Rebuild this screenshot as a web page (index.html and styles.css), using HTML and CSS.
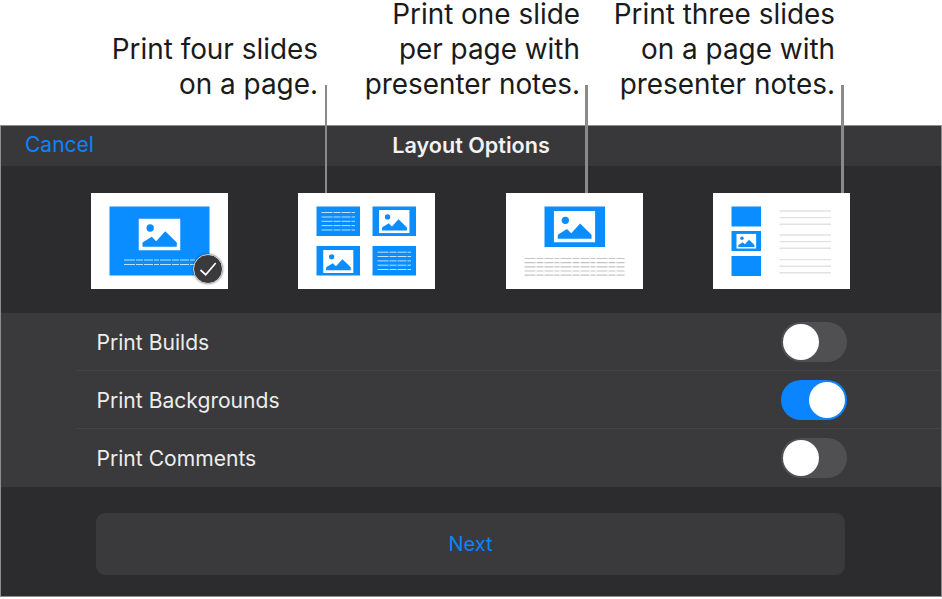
FILE: index.html
```html
<!DOCTYPE html>
<html lang="en">
<head>
    <meta charset="UTF-8">
    <meta name="viewport" content="width=device-width, initial-scale=1.0">
    <title>Layout Options</title>
    <link rel="stylesheet" href="styles.css">
</head>
<body>
    <svg class="defs" width="0" height="0" aria-hidden="true">
        <symbol id="pic" viewBox="0 0 42 32">
            <rect width="42" height="32" fill="#fff"/>
            <circle cx="11.7" cy="9.5" r="3.7" fill="#0a8dff"/>
            <path d="M4 24L13.3 18.3L17.7 22.7L26.7 12.7L38.3 24V28.3H4Z" fill="#0a8dff"/>
        </symbol>
    </svg>

    <div class="page">
        <div class="captions">
            <p class="caption">Print four slides<br>on a page.</p>
            <p class="caption">Print one slide<br>per page with<br>presenter notes.</p>
            <p class="caption">Print three slides<br>on a page with<br>presenter notes.</p>
        </div>

        <!-- leader lines from the captions down to the thumbnails -->
        <span class="leader leader-four"></span>
        <span class="leader leader-one"></span>
        <span class="leader leader-three"></span>

        <div class="panel">
            <div class="nav">
                <span class="cancel">Cancel</span>
                <span class="title">Layout Options</span>
            </div>

            <div class="thumbs">
                <div class="thumb">
                    <svg width="137" height="96" viewBox="0 0 137 96">
                        <rect width="137" height="96" fill="#fff"/>
                        <rect x="18.5" y="13.5" width="100" height="69" fill="#0a8dff"/>
                        <use href="#pic" x="47.5" y="25.5" width="42" height="32"/>
                        <g class="dash dash-white">
                            <path d="M33 67H104M33 71.5H104"/>
                        </g>
                    </svg>
                    <span class="check">
                        <svg width="30" height="30" viewBox="0 0 30 30">
                            <path d="M7.5 16L12.7 20.7L22.7 9" fill="none" stroke="#fff" stroke-width="1.7"/>
                        </svg>
                    </span>
                </div>

                <div class="thumb">
                    <svg width="137" height="96" viewBox="0 0 137 96">
                        <rect width="137" height="96" fill="#fff"/>
                        <rect x="18.5" y="13.5" width="43.5" height="29.5" fill="#0a8dff"/>
                        <rect x="74.5" y="13.5" width="43.5" height="29.5" fill="#0a8dff"/>
                        <rect x="18.5" y="53" width="43.5" height="29.5" fill="#0a8dff"/>
                        <rect x="74.5" y="53" width="43.5" height="29.5" fill="#0a8dff"/>
                        <use href="#pic" x="81" y="17" width="30.7" height="23.3"/>
                        <use href="#pic" x="25" y="57" width="30.7" height="23"/>
                        <g class="dash dash-white">
                            <path d="M23.5 19.5H57M23.5 24H57M23.5 28.3H57M23.5 32.6H57M23.5 37H57"/>
                            <path d="M79.5 59.2H113M79.5 63.5H113M79.5 67.9H113M79.5 72.2H113M79.5 76.5H113"/>
                        </g>
                    </svg>
                </div>

                <div class="thumb">
                    <svg width="137" height="96" viewBox="0 0 137 96">
                        <rect width="137" height="96" fill="#fff"/>
                        <rect x="38.5" y="13.5" width="60.5" height="40.5" fill="#0a8dff"/>
                        <use href="#pic" x="47.5" y="18" width="42" height="31.5"/>
                        <g class="dash dash-grey">
                            <path d="M18.5 65.5H118.5M18.5 69.6H118.5M18.5 73.8H118.5M18.5 78H118.5M18.5 82.2H118.5"/>
                        </g>
                    </svg>
                </div>

                <div class="thumb">
                    <svg width="137" height="96" viewBox="0 0 137 96">
                        <rect width="137" height="96" fill="#fff"/>
                        <rect x="18.5" y="13.5" width="29.5" height="20" fill="#0a8dff"/>
                        <rect x="18.5" y="38" width="29.5" height="20" fill="#0a8dff"/>
                        <rect x="18.5" y="63" width="29.5" height="20" fill="#0a8dff"/>
                        <use href="#pic" x="23" y="40.7" width="20.7" height="15"/>
                        <path d="M66.5 18H118M66.5 24.6H118M66.5 31.2H118M66.5 42H118M66.5 48.6H118M66.5 55.2H118M66.5 66.6H118M66.5 73.2H118M66.5 79.8H118" stroke="#e2e2e2" stroke-width="1.4" fill="none"/>
                    </svg>
                </div>
            </div>

            <div class="options">
                <div class="row">
                    <span class="label">Print Builds</span>
                    <span class="switch"><span class="knob"></span></span>
                </div>
                <div class="row">
                    <span class="label">Print Backgrounds</span>
                    <span class="switch on"><span class="knob"></span></span>
                </div>
                <div class="row">
                    <span class="label">Print Comments</span>
                    <span class="switch"><span class="knob"></span></span>
                </div>
            </div>

            <div class="footer">
                <div class="next">Next</div>
            </div>
        </div>
    </div>
</body>
</html>
```

FILE: styles.css
```css
* {
    box-sizing: border-box;
}
html, body {
    margin: 0;
    background: #fff;
    overflow: hidden;
}
body {
    font-family: Inter, "Liberation Sans", sans-serif;
}
.defs {
    display: block;
    height: 0;
}
.page {
    position: relative;
    width: 942px;
    height: 599px;
}

/* captions */
.captions {
    display: grid;
    grid-template-columns: 318px 262px 255px;
    align-items: start;
    height: 125px;
}
.caption {
    margin: -3px 0 0;
    font-size: 27.9px;
    line-height: 35px;
    text-align: right;
    color: #1a1a1a;
    white-space: nowrap;
}
.caption:first-child {
    padding-top: 35px;
}
.leader {
    position: absolute;
    z-index: 1;
    top: 85px;
    width: 2.4px;
    height: 108px;
    background: #8a8a8a;
}
.leader-four { left: 324.5px; }
.leader-one { left: 585.2px; }
.leader-three { left: 841.2px; }

/* dark sheet */
.panel {
    height: 472px;
    border: 1px solid #8e8e90;
    background: #2c2c2e;
}
.nav {
    display: flex;
    align-items: center;
    justify-content: center;
    position: relative;
    height: 40px;
    padding-bottom: 3px;
    background: #38383a;
}
.cancel {
    position: absolute;
    left: 24px;
    font-size: 21px;
    color: #0a84ff;
}
.title {
    font-size: 21.6px;
    font-weight: 600;
    color: #f2f2f2;
}
.thumbs {
    display: flex;
    gap: 70.5px;
    height: 147px;
    padding: 27px 0 0 89.5px;
}
.thumb {
    position: relative;
    width: 137px;
    height: 96px;
}
.thumb > svg {
    display: block;
}
.dash path {
    fill: none;
    stroke-width: 1;
    stroke-dasharray: 11 1 7 1 9 1 5 1;
}
.dash-white path {
    stroke: #bfe0ff;
}
.dash-grey path {
    stroke-width: 1.2;
    stroke: #c4c4c4;
}
.check {
    position: absolute;
    right: 5px;
    bottom: 5px;
    display: flex;
    align-items: center;
    justify-content: center;
    width: 30px;
    height: 30px;
    border-radius: 50%;
    background: #3a3a3c;
    border: 1px solid #d8d8d8;
    box-shadow: 0 0 2px rgba(0, 0, 0, 0.5);
}
.check svg {
    flex: none;
}

/* toggles */
.options {
    background: #3a3a3c;
    padding-left: 75px;
}
.row {
    display: flex;
    align-items: center;
    justify-content: space-between;
    height: 58px;
    padding: 0 94px 0 20.5px;
    box-shadow: inset 0 -1px 0 #444446;
}
.row:last-child {
    box-shadow: none;
}
.label {
    font-size: 21.1px;
    color: #ededed;
}
.switch {
    display: flex;
    width: 66px;
    height: 40px;
    padding: 2px;
    border-radius: 20px;
    background: #505053;
}
.switch.on {
    justify-content: flex-end;
    background: #0a84ff;
}
.knob {
    width: 36px;
    height: 36px;
    border-radius: 50%;
    background: #fff;
}

/* next button */
.footer {
    padding: 26px 96px 0 95px;
}
.next {
    display: flex;
    align-items: center;
    justify-content: center;
    height: 62px;
    border-radius: 9px;
    background: #3a3a3c;
    font-size: 20px;
    color: #0a84ff;
}
```
